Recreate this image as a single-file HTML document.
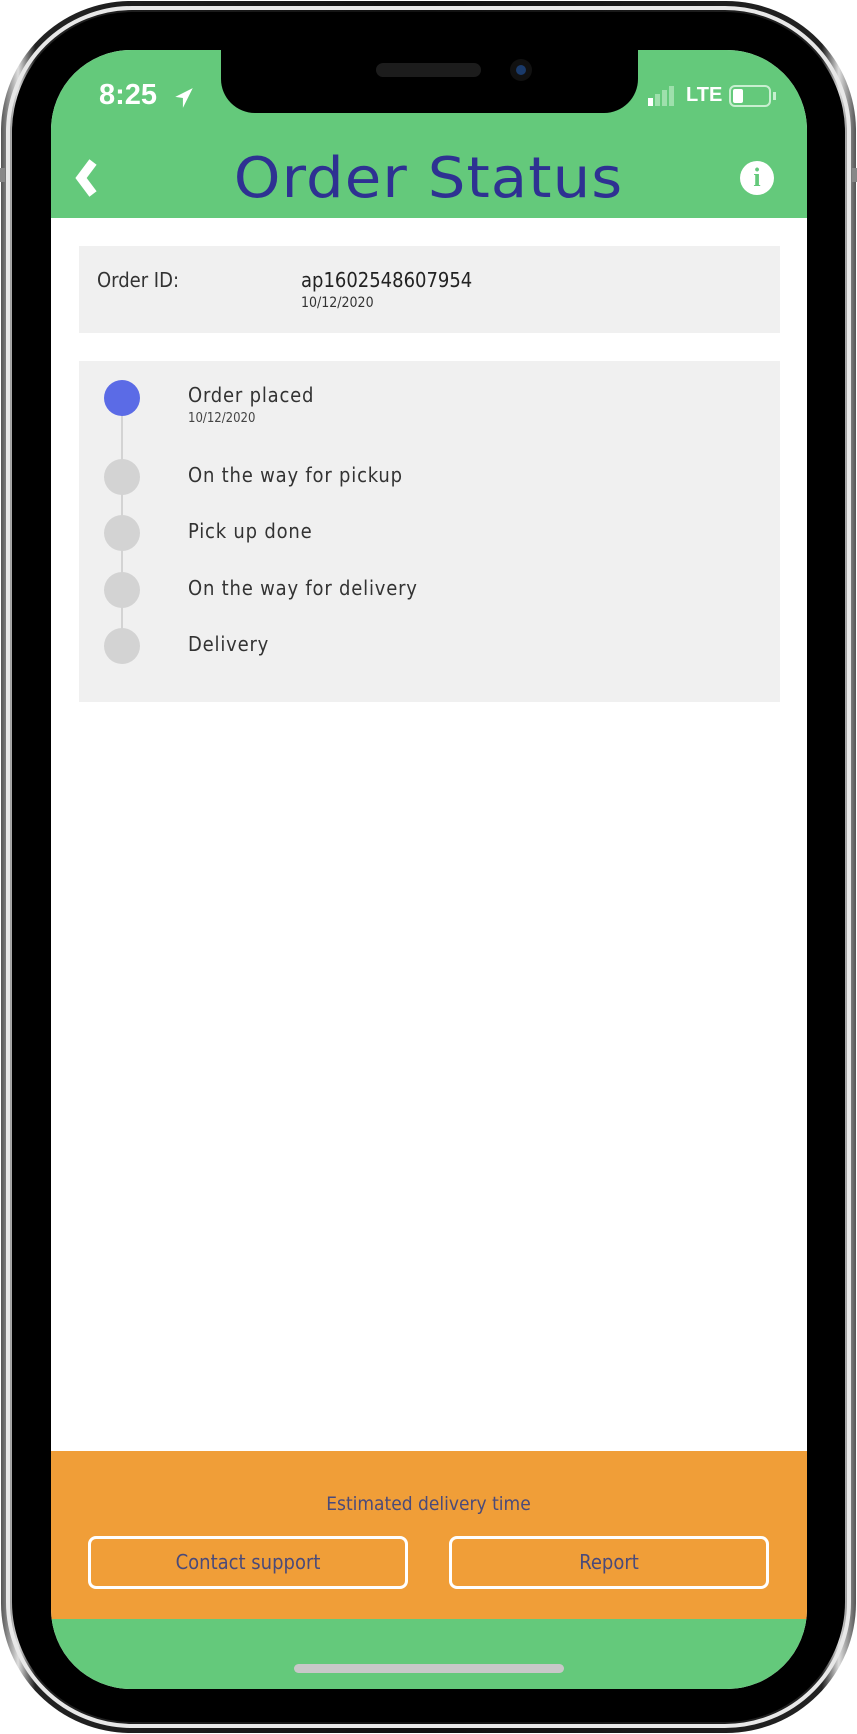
<!DOCTYPE html>
<html><head><style>
*{margin:0;padding:0;box-sizing:border-box}
body{width:857px;height:1734px;background:#fff;position:relative;overflow:hidden;font-family:"DejaVu Sans Condensed","Liberation Sans",sans-serif}
.abs{position:absolute}
</style></head><body>
<!-- phone frame -->
<div class="abs" style="left:1px;top:1px;width:855px;height:1732px;border-radius:130px;background:linear-gradient(90deg,#555,#ddd 2%,#222 4%,#111 50%,#222 96%,#ddd 98%,#555);"></div>
<div class="abs" style="left:6px;top:6px;width:845px;height:1722px;border-radius:126px;border:4px solid #e8e8e8;"></div>
<div class="abs" style="left:12px;top:12px;width:833px;height:1710px;border-radius:120px;background:#000;"></div>
<div class="abs" style="left:0;top:168px;width:5px;height:14px;background:#888"></div>
<div class="abs" style="right:0;top:168px;width:5px;height:14px;background:#888"></div>
<!-- screen -->
<div class="abs" style="left:51px;top:50px;width:756px;height:1639px;border-radius:80px;background:#fff;overflow:hidden;">
  <div class="abs" style="left:0;top:0;width:756px;height:168px;background:#64c97b"></div>
  <div class="abs" style="left:0;top:1401px;width:756px;height:168px;background:#f09e38"></div>
  <div class="abs" style="left:0;top:1569px;width:756px;height:70px;background:#64c97b"></div>
  <div class="abs" style="left:243px;top:1614px;width:270px;height:9px;border-radius:5px;background:#c8c8c8"></div>
</div>
<!-- notch -->
<div class="abs" style="left:221px;top:40px;width:417px;height:73px;background:#000;border-radius:0 0 34px 34px"></div>
<div class="abs" style="left:376px;top:63px;width:105px;height:14px;border-radius:7px;background:#1c1c1c"></div>
<div class="abs" style="left:510px;top:59px;width:22px;height:22px;border-radius:50%;background:#111"><div style="margin:6px;width:10px;height:10px;border-radius:50%;background:#1a3a6a"></div></div>
<!-- status bar -->
<div class="abs" style="left:99px;top:79px;color:#fff;font:bold 29px 'Liberation Sans',sans-serif">8:25</div>
<svg class="abs" style="left:173px;top:86px" width="22" height="24" viewBox="0 0 20 22"><path d="M18 2 L2 10 L9 11 L9 20 Z" fill="#fff"/></svg>
<div class="abs" style="left:648px;top:98px;width:5px;height:8px;background:#fff"></div>
<div class="abs" style="left:655px;top:94px;width:5px;height:12px;background:#9ee0ac"></div>
<div class="abs" style="left:662px;top:90px;width:5px;height:16px;background:#9ee0ac"></div>
<div class="abs" style="left:669px;top:86px;width:5px;height:20px;background:#9ee0ac"></div>
<div class="abs" style="left:686px;top:84px;color:#fff;font:bold 20px 'Liberation Sans',sans-serif">LTE</div>
<div class="abs" style="left:729px;top:85px;width:42px;height:22px;border:2px solid #c8efd0;border-radius:6px"><div style="margin:2px;width:10px;height:14px;background:#fff;border-radius:2px"></div></div>
<div class="abs" style="left:773px;top:92px;width:3px;height:8px;background:#c8efd0"></div>
<!-- header -->
<svg class="abs" style="left:72px;top:158px" width="30" height="40" viewBox="0 0 30 40"><path d="M21 4 L9 20 L21 36" stroke="#fff" stroke-width="9" fill="none" stroke-linejoin="miter"/></svg>
<div class="abs" style="left:0;top:146px;width:857px;text-align:center;color:#2e3192;font:56px 'DejaVu Sans',sans-serif;letter-spacing:1px;transform:scaleX(1.06);transform-origin:428px 0">Order Status</div>
<div class="abs" style="left:740px;top:161px;width:34px;height:34px;border-radius:50%;background:#fff"></div>
<div class="abs" style="left:740px;top:161px;width:34px;height:34px;text-align:center;color:#64c97b;font:bold 26px 'Liberation Serif',serif;line-height:34px">i</div>
<!-- order id box -->
<div class="abs" style="left:79px;top:246px;width:701px;height:87px;background:#f0f0f0"></div>
<div class="abs" style="left:97px;top:268px;color:#333;font-size:20px">Order ID:</div>
<div class="abs" style="left:301px;top:268px;color:#222;font-size:20px">ap1602548607954</div>
<div class="abs" style="left:301px;top:295px;color:#333;font-size:14px">10/12/2020</div>
<!-- timeline -->
<div class="abs" style="left:79px;top:361px;width:701px;height:341px;background:#f0f0f0"></div>
<div class="abs" style="left:121px;top:400px;width:2px;height:246px;background:#d3d3d3"></div>
<div class="abs" style="left:104px;top:380px;width:36px;height:36px;border-radius:50%;background:#5b6be6"></div>
<div class="abs" style="left:104px;top:459px;width:36px;height:36px;border-radius:50%;background:#d3d3d3"></div>
<div class="abs" style="left:104px;top:515px;width:36px;height:36px;border-radius:50%;background:#d3d3d3"></div>
<div class="abs" style="left:104px;top:572px;width:36px;height:36px;border-radius:50%;background:#d3d3d3"></div>
<div class="abs" style="left:104px;top:628px;width:36px;height:36px;border-radius:50%;background:#d3d3d3"></div>
<div class="abs" style="left:188px;top:383px;color:#333;font-size:20px;letter-spacing:.8px">Order placed</div>
<div class="abs" style="left:188px;top:411px;color:#444;font-size:13px">10/12/2020</div>
<div class="abs" style="left:188px;top:463px;color:#333;font-size:20px;letter-spacing:.8px">On the way for pickup</div>
<div class="abs" style="left:188px;top:519px;color:#333;font-size:20px;letter-spacing:.8px">Pick up done</div>
<div class="abs" style="left:188px;top:576px;color:#333;font-size:20px;letter-spacing:.8px">On the way for delivery</div>
<div class="abs" style="left:188px;top:632px;color:#333;font-size:20px;letter-spacing:.8px">Delivery</div>
<!-- bottom -->
<div class="abs" style="left:0;top:1493px;width:857px;text-align:center;color:#4a4a7a;font-size:19px">Estimated delivery time</div>
<div class="abs" style="left:88px;top:1536px;width:320px;height:53px;border:3px solid #fff;border-radius:8px;text-align:center;line-height:47px;color:#4a4a7a;font-size:20px">Contact support</div>
<div class="abs" style="left:449px;top:1536px;width:320px;height:53px;border:3px solid #fff;border-radius:8px;text-align:center;line-height:47px;color:#4a4a7a;font-size:20px">Report</div>
</body></html>
